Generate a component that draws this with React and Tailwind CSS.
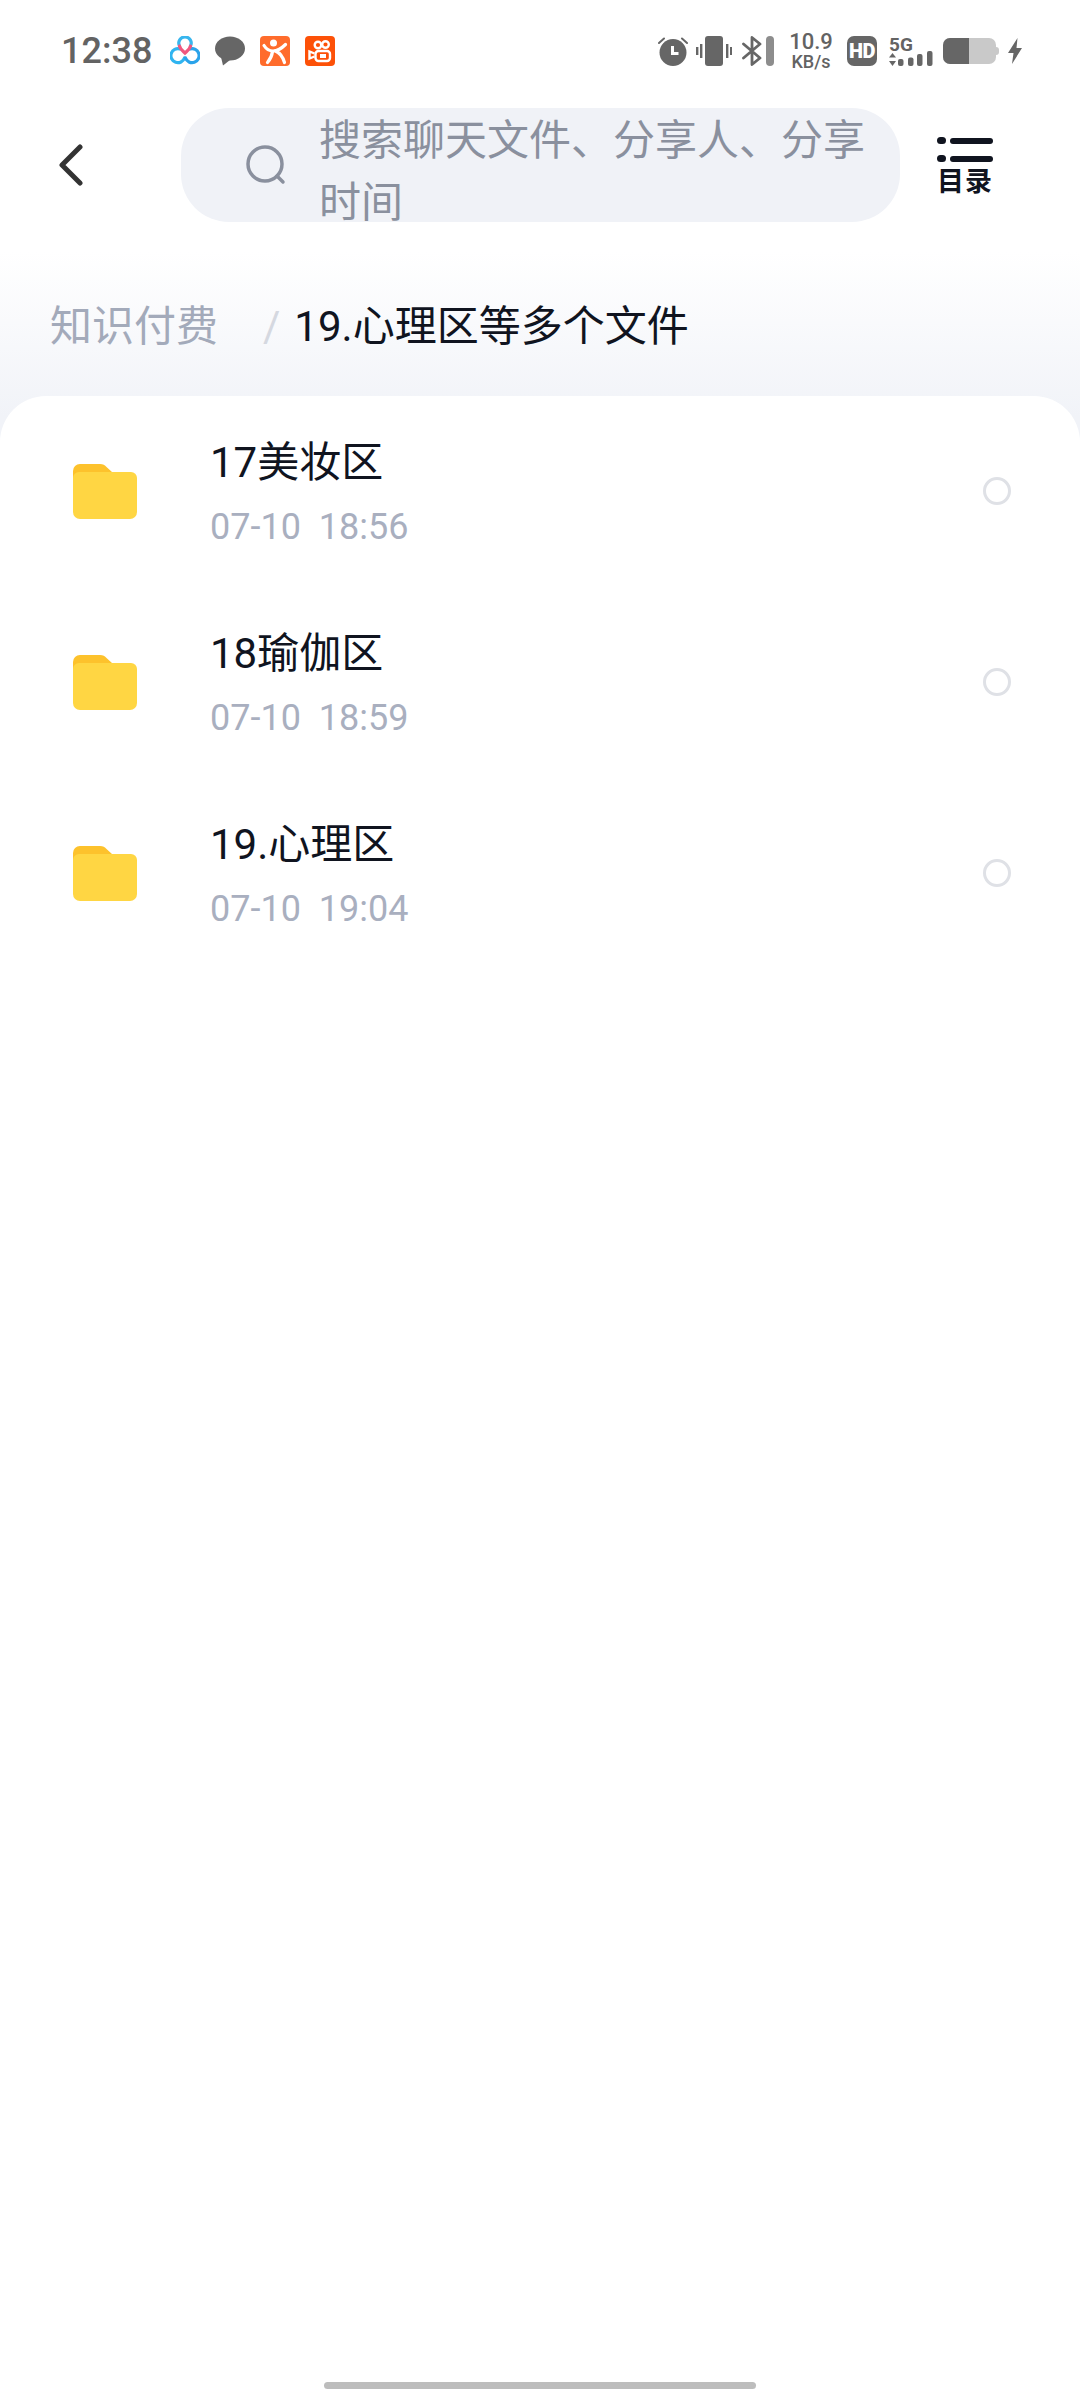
import React from 'react';

const files = [
  { name: '17美妆区', time: '07-10  18:56' },
  { name: '18瑜伽区', time: '07-10  18:59' },
  { name: '19.心理区', time: '07-10  19:04' },
];

const font = 'font-["Roboto","Noto_Sans_CJK_SC",sans-serif]';

const QuanIcon = () => (
  <svg viewBox="0 0 30 30" className="w-[30px] h-[30px]" fill="none" strokeWidth="3.200" strokeLinecap="round">
    <path d="M9.500 10 A6.200 6.200 0 1 1 20.500 10" stroke="#38b6ee" />
    <path d="M10 13 A7 7 0 1 0 14.500 22" stroke="#2fb4f0" />
    <path d="M20 13 A7 7 0 1 1 15.500 22" stroke="#2aa3ea" />
    <path d="M9.500 10 C10 13 13 15 15 17 C17 15 20 13 20.500 10" stroke="#f0587f" />
  </svg>
);

const ChatIcon = () => (
  <svg viewBox="0 0 30 30" className="w-[30px] h-[30px]" fill="#666666">
    <ellipse cx="15" cy="12.500" rx="15" ry="12" />
    <path d="M6 21 L8 29.500 L15 24 Z" />
  </svg>
);

const DianpingIcon = () => (
  <div className="w-[30px] h-[30px] rounded-[4px] bg-[#ff6c2c] flex items-center justify-center">
    <svg viewBox="0 0 30 30" className="w-[30px] h-[30px]" fill="none" stroke="#fff" strokeLinecap="round">
      <circle cx="13.500" cy="7" r="3.500" fill="#fff" stroke="none" />
      <path d="M4 9.500C6.500 13.500 9.500 15 13 15c4.500 0 8.500 -2.500 12.500 -6.500" strokeWidth="3.200" />
      <path d="M12.500 15.500C12 20 10 23.500 7.500 26.500" strokeWidth="3.200" />
      <path d="M15.500 15c4.500 2 7.500 6 9 11.500" strokeWidth="3.200" />
    </svg>
  </div>
);

const KuaishouIcon = () => (
  <div className="w-[30px] h-[30px] rounded-[4px] bg-[#fd5108] flex items-center justify-center">
    <svg viewBox="0 0 30 30" className="w-[30px] h-[30px]" fill="none" stroke="#fff" strokeWidth="2.400">
      <circle cx="13" cy="9" r="3.300" />
      <circle cx="20.500" cy="8.500" r="3.300" />
      <rect x="10.500" y="15" width="14.500" height="10" rx="3" />
      <path d="M9.500 17.500L4.500 15.500v7L9.500 20.500" />
      <rect x="15" y="18" width="6" height="4" fill="#fff" stroke="none" />
    </svg>
  </div>
);

const AlarmIcon = () => (
  <svg viewBox="0 0 30 30" className="w-[30px] h-[30px]" fill="#666666">
    <circle cx="15" cy="16.500" r="13.500" />
    <path d="M1 7 L6 2.500" stroke="#666666" strokeWidth="2" strokeLinecap="round" />
    <path d="M29 7 L24 2.500" stroke="#666666" strokeWidth="2" strokeLinecap="round" />
    <path d="M14.500 10v7.500h6" stroke="#fff" strokeWidth="3" fill="none" />
  </svg>
);

const VibrateIcon = () => (
  <svg viewBox="0 0 36 30" className="w-[36px] h-[30px]" fill="#666666">
    <rect x="9" y="0" width="18" height="30" rx="3" />
    <rect x="4" y="8" width="2.400" height="14" />
    <rect x="0" y="11" width="2.400" height="8" />
    <rect x="30" y="8" width="2.400" height="14" />
    <rect x="34" y="11" width="2.400" height="8" />
  </svg>
);

const BluetoothIcon = () => (
  <svg viewBox="0 0 32 30" className="w-[32px] h-[30px]" fill="none">
    <path d="M1.500 8 L18 22 L10 28.500 V1.500 L18 8 L1.500 22" stroke="#666666" strokeWidth="2.800" strokeLinecap="round" strokeLinejoin="round" />
    <rect x="24" y="0" width="8" height="30" rx="4" fill="#8d8d8d" />
  </svg>
);

const SignalIcon = () => (
  <svg viewBox="0 0 44 16" className="w-[44px] h-[16px]" fill="#666666">
    <path d="M3.500 2 L7 6.500 H0 Z" />
    <path d="M3.500 15 L0 10 H7 Z" />
    <rect x="9" y="8" width="5.500" height="7" rx="2" />
    <rect x="19" y="6.500" width="5.500" height="8.500" rx="2" />
    <rect x="28" y="3" width="5.500" height="12" rx="2" />
    <rect x="38" y="0" width="5.500" height="15" rx="2" />
  </svg>
);

const BoltIcon = () => (
  <svg viewBox="0 0 14 26" className="w-[14px] h-[26px]" fill="#666666">
    <path d="M9.500 0 L0 15 H5.500 L4 26 L14 10 H8.500 Z" />
  </svg>
);

const FolderIcon = () => (
  <svg viewBox="0 0 64 55" className="w-[64px] h-[55px]">
    <path d="M0 7a7 7 0 0 1 7 -7h20c3 0 5 1 6.500 3l5.500 5v10H0Z" fill="#fdc22c" />
    <path d="M0 14a6 6 0 0 1 6 -6h52a6 6 0 0 1 6 6v34a7 7 0 0 1 -7 7H7a7 7 0 0 1 -7 -7Z" fill="#ffd643" />
  </svg>
);

const StatusBar = () => (
  <div className="h-[102px] pl-[61px] flex items-center text-[#636363]">
    <span className="text-[36px] leading-none font-medium w-[109px]">12:38</span>
    <div className="flex items-center gap-[15px]">
      <QuanIcon />
      <ChatIcon />
      <DianpingIcon />
      <KuaishouIcon />
    </div>
    <div className="ml-[323px] flex items-center">
      <AlarmIcon />
      <div className="ml-[8px]"><VibrateIcon /></div>
      <div className="ml-[10px]"><BluetoothIcon /></div>
      <div className="ml-[17px] w-[40px] flex flex-col items-center font-medium">
        <span className="text-[22px] h-[22px] leading-[22px]">10.9</span>
        <span className="text-[18px] h-[18px] leading-[18px]">KB/s</span>
      </div>
      <div className="ml-[16px] w-[30px] h-[30px] rounded-[7px] bg-[#666666] flex items-center justify-center">
        <span className="text-white text-[20px] font-black leading-none tracking-[-0.5px]">HD</span>
      </div>
      <div className="ml-[12px] w-[44px] flex flex-col">
        <span className="text-[19px] font-bold leading-none h-[16px]">5G</span>
        <SignalIcon />
      </div>
      <div className="ml-[10px] w-[53px] h-[26px] rounded-[7px] bg-[#c9c9c9] overflow-hidden">
        <div className="w-[26px] h-full bg-[#666666]" />
      </div>
      <div className="w-[3px] h-[8px] bg-[#c9c9c9] rounded-r-sm" />
      <div className="ml-[9px]"><BoltIcon /></div>
    </div>
  </div>
);

const Header = () => (
  <div className="flex items-center pl-[59px] h-[114px] mt-[6px]">
    <svg viewBox="0 0 24 42" className="w-[24px] h-[42px]" fill="none" stroke="#333333" strokeWidth="5" strokeLinecap="round" strokeLinejoin="round">
      <path d="M21 3 L3 21 L21 39" />
    </svg>
    <div className="ml-[98px] w-[719px] h-[114px] rounded-[48px] bg-[#f0f2f7] overflow-hidden flex">
      <svg viewBox="0 0 42 42" className="ml-[64px] mt-[36px] w-[42px] h-[42px] shrink-0" fill="none" stroke="#8a909e" strokeWidth="3.500" strokeLinecap="round">
        <circle cx="20" cy="20" r="17" />
        <path d="M32 32 L38 38" />
      </svg>
      <div className="ml-[32px] pt-[2px] w-[550px] text-[42px] leading-[62px] text-[#8a909e] shrink-0">
        搜索聊天文件、分享人、分享时间
      </div>
    </div>
    <div className="ml-[37px] w-[56px] flex flex-col items-center pt-[3px]">
      <div className="flex flex-col gap-[11px] w-full">
        <div className="flex items-center gap-[4px]">
          <div className="w-[9px] h-[7px] rounded-full bg-[#10141f]" />
          <div className="flex-1 h-[6px] rounded-full bg-[#10141f]" />
        </div>
        <div className="flex items-center gap-[4px]">
          <div className="w-[9px] h-[7px] rounded-full bg-[#10141f]" />
          <div className="flex-1 h-[6px] rounded-full bg-[#10141f]" />
        </div>
      </div>
      <span className="mt-[6px] text-[27px] leading-[28px] font-bold tracking-[1px] text-[#10141f] whitespace-nowrap">目录</span>
    </div>
  </div>
);

const Row = ({ name, time }) => (
  <div className="h-[191px] flex items-center pl-[73px] pr-[69px]">
    <FolderIcon />
    <div className="ml-[73px] flex-1">
      <div className="text-[42px] leading-[56px] -mt-[2px] text-[#10141f]">{name}</div>
      <div className="mt-[16px] text-[36px] leading-[40px] text-[#a9afbf] whitespace-pre">{time}</div>
    </div>
    <div className="w-[28px] h-[28px] -mt-[2px] rounded-full border-[3px] border-[#dfe1e6]" />
  </div>
);

export default function App() {
  return (
    <div className={`w-[1080px] h-[2400px] bg-white flex flex-col relative ${font}`}>
      <StatusBar />
      <Header />
      <div className="flex-1 flex flex-col bg-[linear-gradient(#ffffff_30px,#f1f3f8_195px)]">
        <div className="h-[174px] pl-[50px] pt-[75px] flex items-start text-[42px] leading-[60px]">
          <span className="text-[#a3aaba]">知识付费</span>
          <span className="ml-[45px] text-[#d5d8e0]">/</span>
          <span className="ml-[14px] text-[#10141f]">19.心理区等多个文件</span>
        </div>
        <div className="flex-1 bg-white rounded-t-[46px]">
          {files.map((f) => (
            <Row key={f.name} name={f.name} time={f.time} />
          ))}
        </div>
      </div>
      <div className="absolute left-[324px] bottom-[11px] w-[432px] h-[7px] rounded-full bg-[#bdbdbd]" />
    </div>
  );
}
